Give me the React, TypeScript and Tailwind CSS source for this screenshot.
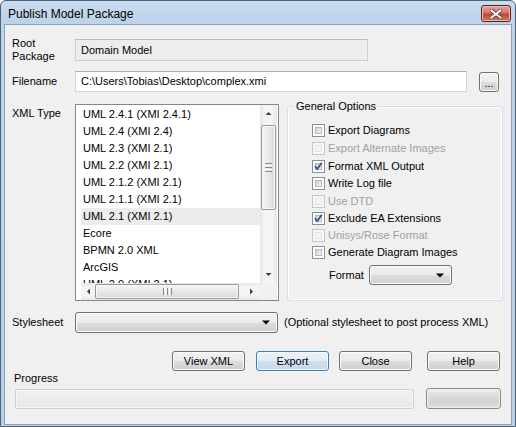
import React from 'react'

const items = [
  'UML 2.4.1 (XMI 2.4.1)',
  'UML 2.4 (XMI 2.4)',
  'UML 2.3 (XMI 2.1)',
  'UML 2.2 (XMI 2.1)',
  'UML 2.1.2 (XMI 2.1)',
  'UML 2.1.1 (XMI 2.1)',
  'UML 2.1 (XMI 2.1)',
  'Ecore',
  'BPMN 2.0 XML',
  'ArcGIS',
  'UML 2.0 (XMI 2.1)',
]

const options = [
  { label: 'Export Diagrams', checked: false, disabled: false, h: 'h-[18px]' },
  { label: 'Export Alternate Images', checked: false, disabled: true, h: 'h-[18px]' },
  { label: 'Format XML Output', checked: true, disabled: false, h: 'h-[18px]' },
  { label: 'Write Log file', checked: false, disabled: false, h: 'h-[17px]' },
  { label: 'Use DTD', checked: false, disabled: true, h: 'h-[18px]' },
  { label: 'Exclude EA Extensions', checked: true, disabled: false, h: 'h-[17px]' },
  { label: 'Unisys/Rose Format', checked: false, disabled: true, h: 'h-[17px]' },
  { label: 'Generate Diagram Images', checked: false, disabled: false, h: 'h-[16px]' },
]

const btn =
  'border border-[#707070] rounded-[3px] bg-[linear-gradient(to_bottom,#f2f2f2_0%,#ebebeb_50%,#dddddd_50%,#cfcfcf_100%)] shadow-[inset_0_0_0_1px_#fbfbfb] flex items-center justify-center'

function Arrow({ dir }: { dir: 'up' | 'down' | 'left' | 'right' }) {
  const d = {
    up: 'M0.5 4 L3.5 1 L6.5 4 Z',
    down: 'M0.5 1 L3.5 4 L6.5 1 Z',
    left: 'M4 0.5 L1 3.5 L4 6.5 Z',
    right: 'M1 0.5 L4 3.5 L1 6.5 Z',
  }[dir]
  const vert = dir === 'up' || dir === 'down'
  return (
    <svg width={vert ? 7 : 5} height={vert ? 5 : 7} viewBox={vert ? '0 0 7 5' : '0 0 5 7'}>
      <path d={d} fill="#404040" />
    </svg>
  )
}

function DropArrow() {
  return (
    <svg width="8" height="5" viewBox="0 0 8 5">
      <path d="M0 0.5 L8 0.5 L4 4.5 Z" fill="#000" />
    </svg>
  )
}

function Check({ checked, disabled }: { checked: boolean; disabled: boolean }) {
  return (
    <span
      className={`relative flex w-[13px] h-[13px] p-[2px] border ${
        disabled ? 'border-[#c6c6c6] bg-[#f7f7f7]' : 'border-[#8e8f8f] bg-white'
      }`}
    >
      <span
        className={`flex-1 border ${
          disabled
            ? 'border-[#e3e3e3] bg-[#f4f4f4]'
            : 'border-[#b5b9bf] bg-[linear-gradient(135deg,#cdd1d6,#f4f4f4)]'
        }`}
      />
      {checked && (
        <svg className="absolute left-0 top-0" width="11" height="11" viewBox="0 0 11 11">
          <path d="M2 5.2 L4.3 8 L8.8 1.8" fill="none" stroke="#3e5395" strokeWidth="1.9" />
        </svg>
      )}
    </span>
  )
}

export default function App() {
  return (
    <div className="w-[516px] h-[427px] flex flex-col border border-[#4f6275] rounded-t-[6px] bg-[linear-gradient(to_bottom,#c9dcf0,#bcd3eb_20px,#b9d1ea)] font-['Liberation_Sans',Arial,sans-serif] text-[11px] leading-[13px] text-black overflow-hidden">
      {/* title bar */}
      <div className="h-[23px] shrink-0 flex items-center justify-between pl-[7px] pr-[4px]">
        <span className="text-[12px] leading-[14px] pt-[2px] text-black">Publish Model Package</span>
        <div className="w-[30px] h-[17px] mt-[2px] rounded-[3px] border border-[#5c1f18] bg-[linear-gradient(to_bottom,#e6a597,#d47666_45%,#c2462f_55%,#d0735d)] shadow-[inset_0_0_0_1px_#eec0b5] flex items-center justify-center">
          <svg width="12" height="10" viewBox="0 0 12 10">
            <path
              d="M1.5 1.5 L10.5 8.5 M10.5 1.5 L1.5 8.5"
              stroke="#3a3a3a"
              strokeWidth="3.6"
              strokeLinecap="square"
            />
            <path d="M1.5 1.5 L10.5 8.5 M10.5 1.5 L1.5 8.5" stroke="#fff" strokeWidth="2" strokeLinecap="square" />
          </svg>
        </div>
      </div>

      {/* client area */}
      <div className="flex-1 ml-[3px] mr-[3px] mb-[1px] border border-[#8da2b9] bg-[#f0f0f0] pl-[7px] flex flex-col">
        {/* Root package */}
        <div className="flex items-start mt-[14px]">
          <div className="w-[63px] -mt-[2px]">
            Root
            <br />
            Package
          </div>
          <div className="w-[293px] h-[22px] border border-[#cfcfcf] border-t-[#bcbcbc] bg-[#ededed] flex items-center pl-[5px]">
            Domain Model
          </div>
        </div>

        {/* Filename */}
        <div className="flex items-center mt-[8px]">
          <div className="w-[63px]">Filename</div>
          <div className="w-[392px] h-[21px] border border-[#d2d4d9] border-t-[#abadb3] bg-white flex items-center pl-[5px]">
            C:\Users\Tobias\Desktop\complex.xmi
          </div>
          <div className={`${btn} w-[20px] h-[20px] ml-[12px] pt-[3px] text-[11px]`}>...</div>
        </div>

        {/* XML type + options */}
        <div className="flex items-start mt-[12px]">
          <div className="w-[63px] pt-[3px]">XML Type</div>
          <div className="w-[204px] h-[197px] border border-[#828790] bg-white flex flex-col pl-[5px] pt-[1px]">
            <div className="flex h-[177px]">
              <div className="w-[179px] h-[177px] overflow-hidden flex flex-col">
                {items.map((it, i) => (
                  <div
                    key={it}
                    className={`h-[17px] shrink-0 flex items-center pl-[2px] ${i === 6 ? 'bg-[#ececec]' : ''}`}
                  >
                    {it}
                  </div>
                ))}
              </div>
              {/* vertical scrollbar */}
              <div className="w-[17px] h-[178px] -mt-[1px] flex flex-col items-center bg-[linear-gradient(to_right,#e6e6e6,#f4f4f4_25%,#f4f4f4_75%,#e6e6e6)]">
                <div className="h-[17px] shrink-0 flex items-center justify-center w-full">
                  <Arrow dir="up" />
                </div>
                <div className="mt-[3px] w-[15px] h-[85px] shrink-0 rounded-[2px] border border-[#979797] bg-[linear-gradient(to_right,#f5f5f5,#e8e8e8_50%,#d9d9d9)] shadow-[inset_0_0_0_1px_#fafafa] flex flex-col items-center justify-center gap-[1px]">
                  <div className="w-[7px] h-[1px] bg-[#8a8a8a]" />
                  <div className="w-[7px] h-[1px] bg-[#ffffff]" />
                  <div className="w-[7px] h-[1px] bg-[#8a8a8a]" />
                  <div className="w-[7px] h-[1px] bg-[#ffffff]" />
                  <div className="w-[7px] h-[1px] bg-[#8a8a8a]" />
                </div>
                <div className="flex-1" />
                <div className="h-[17px] shrink-0 flex items-center justify-center w-full">
                  <Arrow dir="down" />
                </div>
              </div>
            </div>
            {/* horizontal scrollbar */}
            <div className="flex h-[17px]">
              <div className="w-[179px] h-[17px] flex items-center bg-[linear-gradient(to_bottom,#e6e6e6,#f4f4f4_25%,#f4f4f4_75%,#e6e6e6)]">
                <div className="w-[14px] h-full flex items-center justify-center">
                  <Arrow dir="left" />
                </div>
                <div className="w-[144px] h-[15px] rounded-[2px] border border-[#979797] bg-[linear-gradient(to_bottom,#f5f5f5,#e8e8e8_50%,#d9d9d9)] shadow-[inset_0_0_0_1px_#fafafa] flex items-center justify-center gap-[1px]">
                  <div className="w-[1px] h-[7px] bg-[#8a8a8a]" />
                  <div className="w-[1px] h-[7px] bg-[#ffffff]" />
                  <div className="w-[1px] h-[7px] bg-[#8a8a8a]" />
                  <div className="w-[1px] h-[7px] bg-[#ffffff]" />
                  <div className="w-[1px] h-[7px] bg-[#8a8a8a]" />
                </div>
                <div className="flex-1 h-full flex items-center justify-end pr-[6px]">
                  <Arrow dir="right" />
                </div>
              </div>
              <div className="w-[17px] h-[17px] bg-[#f0f0f0]" />
            </div>
          </div>

          {/* General options group */}
          <div className="relative ml-[8px] mt-[2px] w-[216px] h-[195px] border border-[#d5dfe5] rounded-[3px] shadow-[inset_0_0_0_1px_#ffffff] flex flex-col pl-[24px] pt-[14px]">
            <span className="absolute -top-[7px] left-[7px] px-[1px] bg-[#f0f0f0]">General Options</span>
            {options.map((o) => (
              <div key={o.label} className={`${o.h} flex items-center gap-[3px] shrink-0`}>
                <Check checked={o.checked} disabled={o.disabled} />
                <span className={o.disabled ? 'text-[#a0a0a0]' : ''}>{o.label}</span>
              </div>
            ))}
            <div className="flex items-center mt-[5px] ml-[17px]">
              <span className="w-[40px]">Format</span>
              <div className={`${btn} w-[83px] h-[20px] justify-end pr-[7px]`}>
                <DropArrow />
              </div>
            </div>
          </div>
        </div>

        {/* Stylesheet */}
        <div className="flex items-center mt-[11px]">
          <div className="w-[63px]">Stylesheet</div>
          <div className={`${btn} w-[203px] h-[21px] justify-end pr-[7px]`}>
            <DropArrow />
          </div>
          <span className="ml-[6px]">(Optional stylesheet to post process XML)</span>
        </div>

        {/* Buttons */}
        <div className="flex mt-[18px] pl-[160px]">
          <div className={`${btn} w-[73px] h-[20px]`}>View XML</div>
          <div className="ml-[11px] w-[73px] h-[20px] border border-[#3c7fb1] rounded-[3px] bg-[linear-gradient(to_bottom,#ebf3f9_0%,#e1ecf5_50%,#d2e0ec_50%,#c6d7e6_100%)] shadow-[inset_0_0_0_1px_#f4f9fc] flex items-center justify-center">
            Export
          </div>
          <div className={`${btn} ml-[10px] w-[73px] h-[20px]`}>Close</div>
          <div className={`${btn} ml-[15px] w-[73px] h-[20px]`}>Help</div>
        </div>

        {/* Progress */}
        <div className="mt-[1px] pl-[2px]">Progress</div>
        <div className="flex items-center mt-[3px] pl-[3px]">
          <div className="w-[399px] h-[20px] border border-[#d0d0d0] rounded-[2px] bg-[linear-gradient(to_bottom,#f0f0f0,#e8e8e8)] shadow-[inset_0_0_0_1px_#f7f7f7]" />
          <div className="ml-[12px] w-[75px] h-[21px] border border-[#8c8c8c] rounded-[3px] bg-[linear-gradient(to_bottom,#f2f2f2,#dedede_30%,#d4d4d4_70%,#e2e2e2)] shadow-[inset_0_0_0_1px_#ececec]" />
        </div>
      </div>
    </div>
  )
}
